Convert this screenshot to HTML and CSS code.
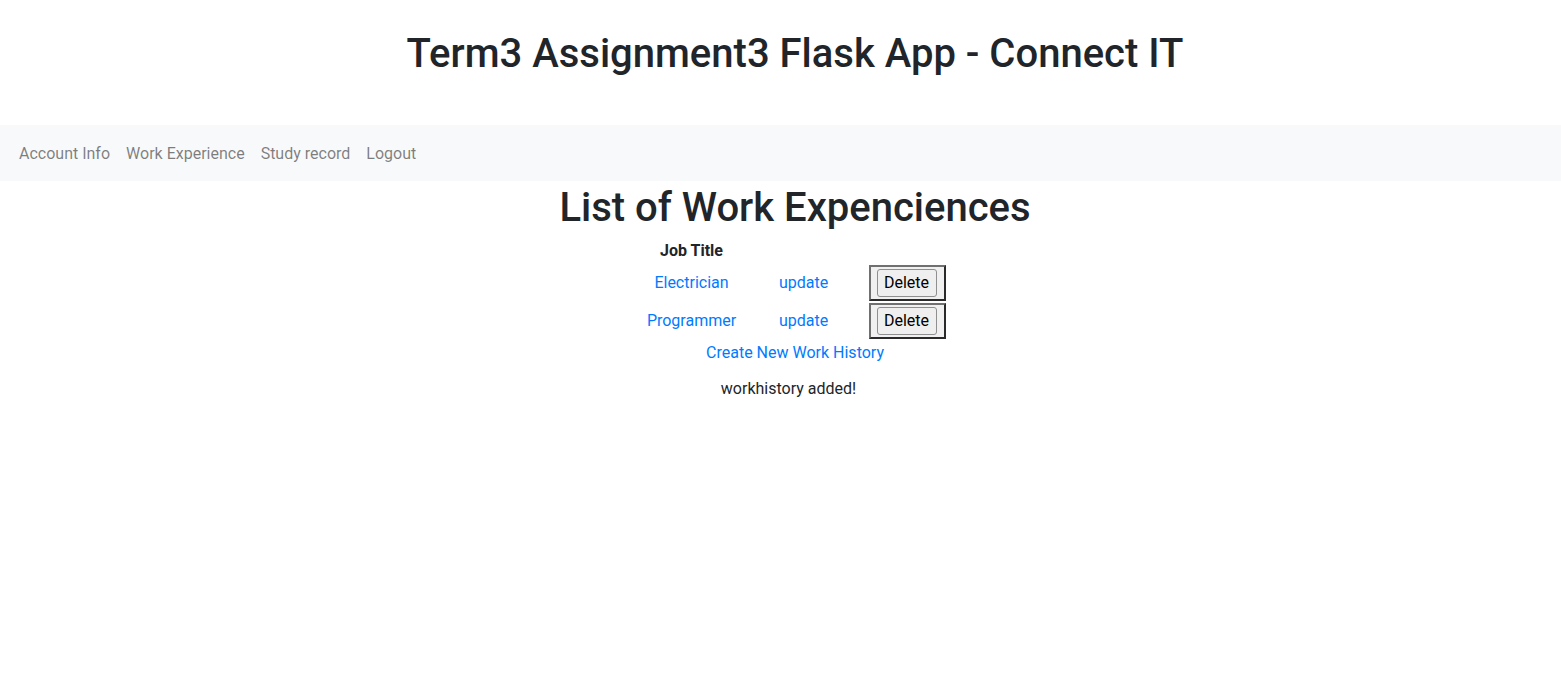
FILE: index.html
```html
<!DOCTYPE html>
<html lang="en">
<head>
<meta charset="utf-8">
<title>Connect IT</title>
<link rel="stylesheet" href="styles.css">
</head>
<body>
<header class="site-header">
  <h1 class="site-title">Term3 Assignment3 Flask App - Connect IT</h1>
</header>
<nav class="navbar">
  <a class="nav-link" href="#">Account Info</a>
  <a class="nav-link" href="#">Work Experience</a>
  <a class="nav-link" href="#">Study record</a>
  <a class="nav-link" href="#">Logout</a>
</nav>
<main class="content">
  <h1 class="page-title">List of Work Expenciences</h1>
  <table class="jobs">
    <thead>
      <tr>
        <th class="col-title">Job Title</th>
        <th class="col-update"></th>
        <th class="col-action"></th>
      </tr>
    </thead>
    <tbody>
      <tr>
        <td><a href="#">Electrician</a></td>
        <td><a href="#">update</a></td>
        <td class="action"><button class="btn-delete" type="button">Delete</button></td>
      </tr>
      <tr>
        <td><a href="#">Programmer</a></td>
        <td><a href="#">update</a></td>
        <td class="action"><button class="btn-delete" type="button">Delete</button></td>
      </tr>
    </tbody>
  </table>
  <div class="create"><a href="#">Create New Work History</a></div>
  <p class="flash">workhistory added!</p>
</main>
</body>
</html>
```
FILE: styles.css
```css
html, body {
  margin: 0;
  padding: 0;
}
body {
  font-family: Roboto, "Liberation Sans", sans-serif;
  font-size: 16px;
  line-height: 1.5;
  color: #212529;
  background: #fff;
}
a {
  color: #007bff;
  text-decoration: none;
}
.site-header {
  text-align: center;
  height: 48px;
  padding: 30px 0 47px 29px;
}
.site-title,
.page-title {
  margin: 0;
  font-size: 40px;
  font-weight: 500;
  line-height: 48px;
}
.navbar {
  display: flex;
  align-items: center;
  box-sizing: border-box;
  height: 56px;
  padding: 2px 11px 0;
  background: #f8f9fa;
}
.nav-link {
  padding: 8px;
  color: rgba(0, 0, 0, 0.5);
}
.content {
  padding-left: 29px;
  text-align: center;
}
.page-title {
  margin: 3px 0 5px;
}
.jobs {
  margin: 0 auto;
  border-collapse: separate;
  border-spacing: 2px;
}
.jobs th {
  padding: 0;
  height: 24px;
  font-weight: 700;
  line-height: 24px;
}
.col-title { width: 94px; }
.col-update { width: 126px; }
.jobs td {
  padding: 0 1px;
  text-align: center;
  vertical-align: middle;
}
.jobs td.action {
  width: 60px;
  padding: 2px 7px 2px 6px;
  border-style: solid;
  border-width: 2px;
  border-color: #707070 #2a2a2a #2a2a2a #707070;
  background: #f0f0f0;
}
.btn-delete {
  display: block;
  box-sizing: border-box;
  width: 60px;
  height: 28px;
  padding: 1px 6px;
  font: inherit;
  line-height: 24px;
  color: #000;
  background: #efefef;
  border: 1px solid #8f8f8f;
  border-radius: 3px;
}
.create {
  line-height: 24px;
}
.flash {
  margin: 12px 0 0;
  padding-right: 13px;
}
```
